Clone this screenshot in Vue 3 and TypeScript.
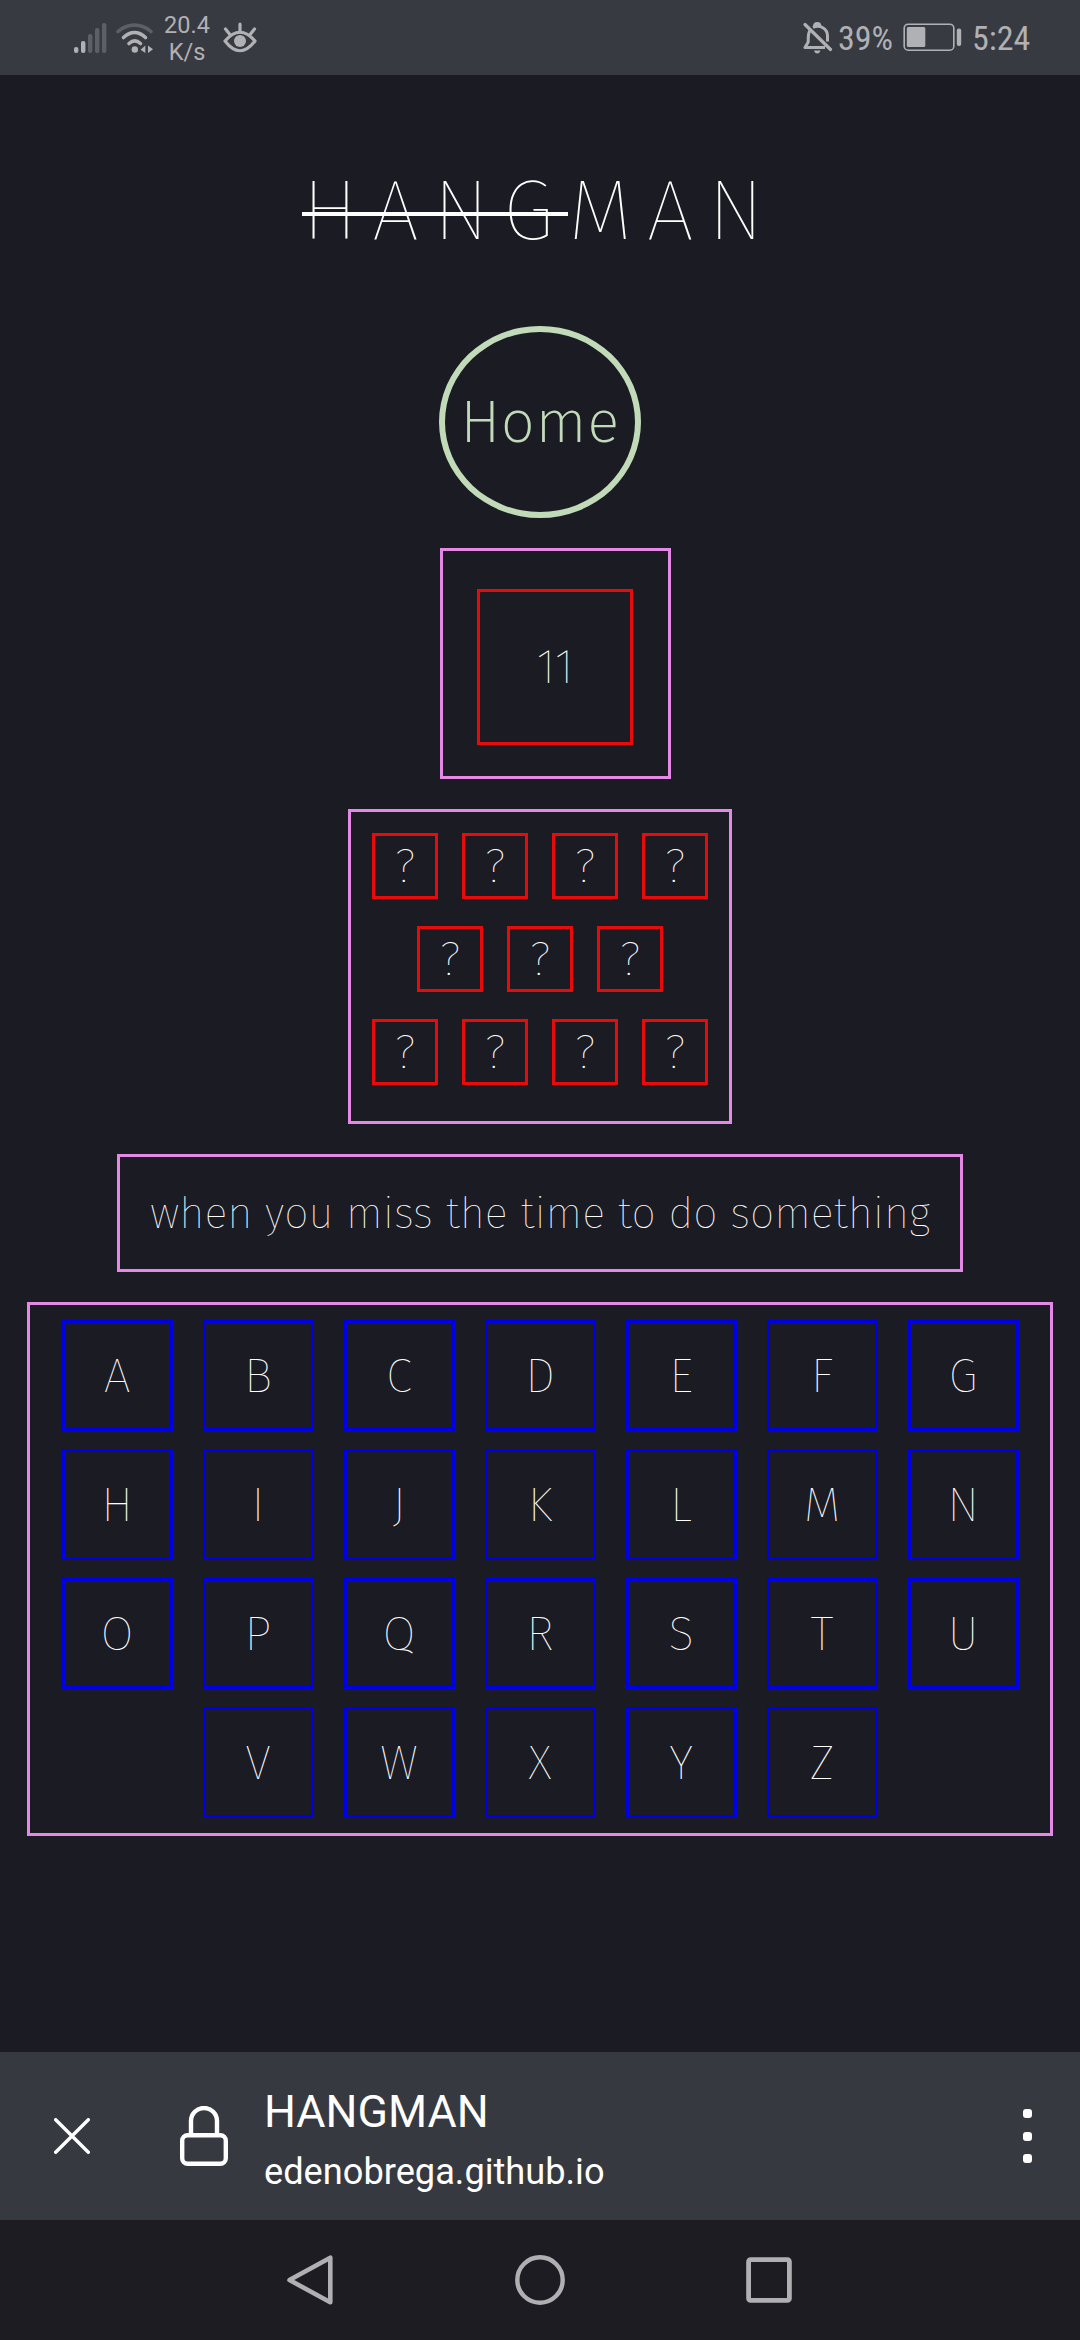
<script setup lang="ts">
const attemptsLeft = 11
const secretRows: string[][] = [
  ['?', '?', '?', '?'],
  ['?', '?', '?'],
  ['?', '?', '?', '?'],
]
const hint = 'when you miss the time to do something'
const keyRows: string[] = ['ABCDEFG', 'HIJKLMN', 'OPQRSTU', 'VWXYZ']
</script>

<template>
  <div class="screen">
    <header class="status">
      <svg class="signal" width="34" height="32" viewBox="0 0 34 32" fill="#b0b1b4">
        <rect x="0" y="25" width="4.4" height="6" rx="2" />
        <rect x="7" y="19" width="4.4" height="12" rx="2" />
        <g fill="#5d5f66">
          <rect x="14" y="12" width="4.4" height="19" rx="2" />
          <rect x="21" y="6" width="4.4" height="25" rx="2" />
          <rect x="28" y="1" width="4.4" height="30" rx="2" />
        </g>
      </svg>
      <svg class="wifi" width="38" height="32" viewBox="0 0 38 32" fill="none" stroke="#b0b1b4" stroke-width="3.6" stroke-linecap="round">
        <path d="M2 9.500C12 1 25 1 35 9.500" stroke="#5d5f66" />
        <path d="M7.500 15.500C14.500 9 22.500 9 29.500 15.500" />
        <path d="M13 21.500C17 18 20.500 18 24.500 21.500" />
        <circle cx="18.800" cy="27.500" r="3.200" fill="#b0b1b4" stroke="none" />
        <path d="M29.300 23.500V31L24.500 27.700ZM32 23.500V31L37 27.200Z" fill="#b0b1b4" stroke="none" />
      </svg>
      <div class="speed"><span>20.4</span><span>K/s</span></div>
      <svg class="eye" width="34" height="32" viewBox="0 0 34 32" fill="none" stroke="#b0b1b4" stroke-width="3.200" stroke-linecap="round" stroke-linejoin="round">
        <path d="M2 19Q17 1.500 32 19Q17 38.500 2 19Z" />
        <path d="M17 10V2M6.500 12L2.500 7M27.500 12L31.500 7" />
        <circle cx="17" cy="19" r="6" fill="#b0b1b4" stroke="none" />
      </svg>
      <div class="spacer"></div>
      <svg class="bell" width="30" height="34" viewBox="0 0 30 34" fill="none" stroke="#b0b1b4" stroke-width="3">
        <path d="M7 9.500C5 12 5.200 15 5.200 21L2 26.500H22M10 6.500C17 3 24.500 8 24.500 15V20.500" stroke-linejoin="round" />
        <path d="M11.500 5.500Q11.500 2.500 14.200 2.500T17 5.500" />
        <path d="M2 3.500L27.500 28.500" stroke-width="3.200" stroke-linecap="round" />
        <path d="M10.800 29.500H17.600Q16.500 32.500 14.200 32.500T10.800 29.500Z" fill="#b0b1b4" stroke="none" />
      </svg>
      <span class="status-text percent">39%</span>
      <svg class="battery" width="60" height="30" viewBox="0 0 60 30" fill="#b0b1b4">
        <rect x="1.200" y="1.200" width="49.600" height="26" rx="4" fill="none" stroke="#b0b1b4" stroke-width="1.600" />
        <rect x="3.800" y="4" width="18.500" height="20" rx="1.500" />
        <rect x="53.800" y="5.500" width="4.400" height="17.500" rx="2" />
      </svg>
      <span class="status-text clock">5:24</span>
    </header>

    <main class="game">
      <h1 class="title"><span class="struck">HANG</span>MAN</h1>
      <button class="home" type="button">Home</button>
      <section class="frame attempts">
        <div class="attempts-box">{{ attemptsLeft }}</div>
      </section>
      <section class="frame secret">
        <div v-for="(row, r) in secretRows" :key="r" class="secret-row">
          <span v-for="(letter, i) in row" :key="i" class="secret-letter">{{ letter }}</span>
        </div>
      </section>
      <section class="frame hint">{{ hint }}</section>
      <section class="frame keyboard">
        <div v-for="row in keyRows" :key="row" class="key-row">
          <button v-for="key in row" :key="key" type="button" class="key">{{ key }}</button>
        </div>
      </section>
    </main>

    <footer class="browser-bar">
      <svg class="close" width="36" height="36" viewBox="0 0 36 36" fill="none" stroke="#fff" stroke-width="3.400" stroke-linecap="round">
        <path d="M1.700 1.700L34.300 34.300M34.300 1.700L1.700 34.300" />
      </svg>
      <svg class="lock" width="48" height="60" viewBox="0 0 48 60" fill="none" stroke="#fff" stroke-width="4.400">
        <rect x="2.200" y="29.200" width="43.600" height="28.600" rx="5.500" />
        <path d="M11 28V15A13 13 0 0 1 37 15V28" />
      </svg>
      <div class="site">
        <div class="site-name">HANGMAN</div>
        <div class="site-url">edenobrega.github.io</div>
      </div>
      <div class="menu"><i></i><i></i><i></i></div>
    </footer>

    <nav class="system-nav">
      <svg width="50" height="54" viewBox="0 0 50 54" fill="none" stroke="#b0afb1" stroke-width="4.600" stroke-linejoin="round">
        <path d="M46.300 4.700V49.300L5.500 27Z" />
      </svg>
      <svg width="50" height="50" viewBox="0 0 50 50" fill="none" stroke="#b0afb1" stroke-width="4.400">
        <circle cx="25" cy="25" r="22.700" />
      </svg>
      <svg width="46" height="46" viewBox="0 0 46 46" fill="none" stroke="#b0afb1" stroke-width="4.800">
        <rect x="2.600" y="2.600" width="40.800" height="40.800" rx="2" />
      </svg>
    </nav>
  </div>
</template>

<style>
body {
  background: #1b1b24;
}
</style>

<style scoped>
.screen {
  display: flex;
  flex-direction: column;
  width: 1080px;
  height: 2340px;
  overflow: hidden;
  background: #1b1b24;
  color: #fff;
  font-family: "Fira Sans", "Noto Sans", sans-serif;
  font-size: 48px;
  font-weight: 100;
  line-height: 1.2;
}

.status {
  display: flex;
  align-items: center;
  flex: none;
  box-sizing: border-box;
  height: 75px;
  padding: 0 48px 0 74px;
  background: #383a42;
  color: #b0b1b4;
  font-family: Roboto, sans-serif;
  font-weight: 400;
}
.wifi {
  margin-left: 8px;
}
.speed {
  display: flex;
  flex-direction: column;
  align-items: center;
  width: 46px;
  margin: 2px 13px 0 10px;
  font-size: 23.5px;
  line-height: 27px;
}
.spacer {
  flex: 1;
}
.status-text {
  font-size: 34px;
  font-stretch: 82%;
  line-height: 40px;
  margin-top: 1px;
  white-space: nowrap;
}
.percent {
  width: 55px;
  margin: 1px 10px 0 5px;
}
.clock {
  width: 60px;
  margin-left: 9px;
}

.game {
  display: flex;
  flex-direction: column;
  align-items: center;
  flex: 1;
}
.title {
  margin: 85px 0 0;
  font-size: 84px;
  font-weight: 100;
  line-height: 101px;
  letter-spacing: 14.4px;
}
.struck {
  position: relative;
  display: inline-block;
}
.struck::after {
  content: "";
  position: absolute;
  top: 52px;
  left: 0;
  right: 0;
  height: 4px;
  background: #fff;
}
.home {
  box-sizing: border-box;
  width: 202px;
  height: 192px;
  margin-top: 65px;
  padding: 0;
  border: 6px solid #c1dbb9;
  border-radius: 50%;
  background: none;
  color: #c1dbb9;
  font: 200 60px/72px "Fira Sans ExtraLight", "Fira Sans", "Noto Sans", sans-serif;
  letter-spacing: 0.6px;
}

.frame {
  box-sizing: border-box;
  border: 3px solid #e688e6;
}
.attempts {
  width: 231px;
  height: 231px;
  margin: 30px 0 0 31px;
  padding: 38px 34px;
}
.attempts-box {
  display: flex;
  align-items: center;
  justify-content: center;
  box-sizing: border-box;
  width: 156px;
  height: 156px;
  padding-top: 2px;
  border: 3px solid #e90a0c;
}
.secret {
  display: flex;
  flex-direction: column;
  gap: 27px;
  width: 384px;
  height: 315px;
  margin-top: 30px;
  padding-top: 21px;
}
.secret-row {
  display: flex;
  justify-content: center;
  gap: 24px;
}
.secret-letter {
  display: flex;
  align-items: center;
  justify-content: center;
  box-sizing: border-box;
  width: 66px;
  height: 66px;
  padding-top: 2px;
  border: 3px solid #e90a0c;
}
.hint {
  display: flex;
  align-items: center;
  justify-content: center;
  width: 846px;
  height: 118px;
  margin-top: 30px;
  padding-top: 2px;
  font-size: 43.2px;
  white-space: nowrap;
}
.keyboard {
  display: flex;
  flex-direction: column;
  gap: 18px;
  width: 1026px;
  height: 534px;
  margin-top: 30px;
  padding-top: 15px;
}
.key-row {
  display: flex;
  justify-content: center;
  gap: 30px;
}
.key {
  box-sizing: border-box;
  width: 111px;
  height: 111px;
  padding: 2px 0 0;
  border: 3px solid #0000e6;
  background: none;
  color: #fff;
  font: 100 48px/57px "Fira Sans", "Noto Sans", sans-serif;
}

.browser-bar {
  display: flex;
  align-items: center;
  flex: none;
  box-sizing: border-box;
  height: 168px;
  padding: 0 48px 0 54px;
  background: #373940;
  font-family: Roboto, sans-serif;
  font-weight: 400;
}
.lock {
  margin-left: 90px;
}
.site {
  flex: 1;
  margin-left: 36px;
  padding-top: 12px;
}
.site-name {
  font-size: 44.8px;
  line-height: 60px;
}
.site-url {
  font-size: 36.2px;
  line-height: 60px;
}
.menu {
  display: flex;
  flex-direction: column;
  gap: 13.5px;
}
.menu i {
  width: 9px;
  height: 9px;
  border-radius: 3px;
  background: #fff;
}

.system-nav {
  display: flex;
  align-items: center;
  flex: none;
  box-sizing: border-box;
  height: 120px;
  padding-left: 284px;
  gap: 181px;
  background: #1d1c22;
}
</style>
